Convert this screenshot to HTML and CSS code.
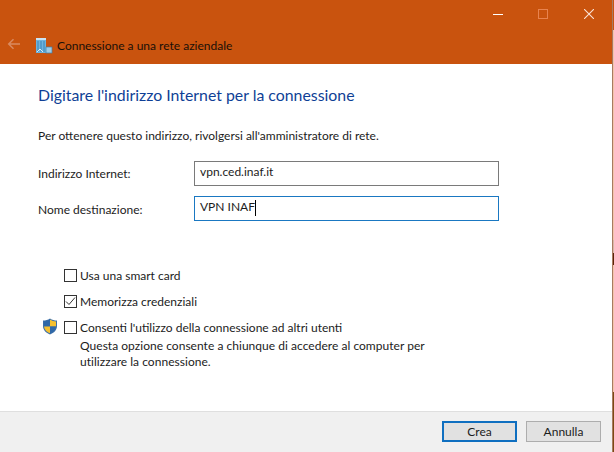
FILE: index.html
```html
<!DOCTYPE html>
<html lang="it">
<head>
<meta charset="utf-8">
<title>Connessione a una rete aziendale</title>
<link rel="stylesheet" href="styles.css">
</head>
<body>
<div class="window">
  <header class="titlebar">
    <div class="controls">
      <span class="ctl"><svg width="10" height="10" viewBox="0 0 10 10"><path d="M0 5.500h10" stroke="#fff" fill="none"/></svg></span>
      <span class="ctl"><svg width="10" height="10" viewBox="0 0 10 10"><rect x=".5" y=".5" width="9" height="9" stroke="#e8834f" fill="none"/></svg></span>
      <span class="ctl"><svg width="10" height="10" viewBox="0 0 10 10"><path d="M0 0l10 10M10 0L0 10" stroke="#fbe3d6" stroke-width="1.1" fill="none"/></svg></span>
    </div>
    <div class="navrow">
      <svg class="back" width="14" height="12" viewBox="0 0 14 12"><path d="M13 6H2M6.500 1.200 1.700 6l4.800 4.800" stroke="#d98a60" stroke-width="1.500" fill="none"/></svg>
      <svg class="appicon" width="18" height="17" viewBox="0 0 18 17">
        <rect x="1" y="1" width="10" height="15" fill="#6fb3dc"/>
        <rect x="1" y="1" width="10" height="2" fill="#c9e4f4"/>
        <path d="M3 4v11M6 4v11M9 4v11" stroke="#2f78ab" stroke-width=".8"/>
        <rect x="11" y="10" width="6" height="6" fill="#9dcbe6" stroke="#3d7fa8" stroke-width=".7"/>
        <path d="M2 15l3-3 3 3" stroke="#fff" stroke-width=".8" fill="none"/>
      </svg>
      <span class="wintitle">Connessione a una rete aziendale</span>
    </div>
  </header>
  <main class="content">
    <h1 class="heading">Digitare l'indirizzo Internet per la connessione</h1>
    <p class="intro">Per ottenere questo indirizzo, rivolgersi all'amministratore di rete.</p>
    <div class="fields">
      <label class="flabel">Indirizzo Internet:</label>
      <div class="input">vpn.ced.inaf.it</div>
      <label class="flabel lower">Nome destinazione:</label>
      <div class="input focused">VPN INAF<span class="caret"></span></div>
    </div>
    <div class="options">
      <div class="opt"><span class="check"></span><span>Usa una smart card</span></div>
      <div class="opt"><span class="check"><svg width="13" height="13" viewBox="0 0 13 13"><path d="M2 6.500l3 3 6-7" stroke="#333" fill="none"/></svg></span><span>Memorizza credenziali</span></div>
      <div class="opt shielded">
        <svg class="shield" width="16" height="17" viewBox="0 0 16 17">
          <path d="M8 .5C6 2 3.500 2.500 1 2.500V8c0 4 3 7 7 8.500 4-1.500 7-4.500 7-8.500V2.500C12.500 2.500 10 2 8 .5z" fill="#3a6ea8"/>
          <path d="M8 1.500V8.500H2V3.400C4 3.300 6.300 2.800 8 1.500z" fill="#2f68a8"/>
          <path d="M8 1.500c1.700 1.300 4 1.800 6 1.900v5.100H8z" fill="#f5c02f"/>
          <path d="M2 8.500h6v6.800C4.800 14 2.300 11.800 2 8.500z" fill="#f5c02f"/>
          <path d="M8 8.500h6c-.3 3.300-2.800 5.500-6 6.800z" fill="#2f68a8"/>
        </svg>
        <span class="check"></span><span>Consenti l'utilizzo della connessione ad altri utenti</span>
      </div>
      <p class="optnote">Questa opzione consente a chiunque di accedere al computer per<br>utilizzare la connessione.</p>
    </div>
  </main>
  <footer class="footer">
    <button class="btn primary">Crea</button>
    <button class="btn">Annulla</button>
  </footer>
</div>
</body>
</html>
```

FILE: styles.css
```css
html, body {
  margin: 0;
  padding: 0;
  height: 100%;
}
body {
  background: linear-gradient(to bottom,
    #c9530e 0, #c9530e 30px,
    #f3c4ac 30px, #f3c4ac 240px,
    #d8b8a8 240px, #d8b8a8 253px,
    #5a2408 253px, #5a2408 265px,
    #f3c4ac 265px, #f3c4ac 392px,
    #7a4a12 392px, #7a4a12 100%);
  font-family: Lato, "Open Sans", sans-serif;
  font-size: 12px;
  color: #1c1c1c;
  overflow: hidden;
}
.window {
  width: 613px;
  height: 452px;
  box-sizing: border-box;
  border-right: 1px solid #a87a62;
  display: flex;
  flex-direction: column;
  background: #fff;
}
.titlebar {
  height: 64px;
  background: #c9530e;
  flex: none;
  display: flex;
  flex-direction: column;
}
.controls {
  display: flex;
  justify-content: flex-end;
  height: 30px;
  padding: 9px 18px 0 0;
  gap: 35px;
  box-sizing: border-box;
}
.ctl {
  display: block;
  width: 10px;
  height: 10px;
}
.ctl:last-child { margin-left: 1px; }
.ctl svg { display: block; }
.navrow {
  display: flex;
  align-items: center;
  height: 30px;
  padding-left: 7px;
}
.back { margin: 0 14px 2px 0; }
.appicon { margin-right: 4px; }
.wintitle { font-size: 12px; color: #1a1008; }
.content {
  flex: 1;
  padding: 0 0 0 38px;
}
.heading {
  margin: 20px 0 0;
  font-size: 15.850px;
  line-height: 22px;
  font-weight: 400;
  color: #0f3f96;
}
.intro {
  margin: 22px 0 0;
  line-height: 16px;
}
.fields {
  margin-top: 17px;
  display: grid;
  grid-template-columns: 156px 305px;
  row-gap: 10px;
  align-items: center;
}
.flabel { line-height: 16px; }
.flabel.lower { padding-top: 3px; }
.input {
  box-sizing: border-box;
  height: 25px;
  border: 1px solid #7a7a7a;
  padding: 0 5px;
  line-height: 20px;
  display: flex;
  align-items: flex-start;
}
.input.focused { border-color: #1a78c2; }
.caret {
  display: inline-block;
  width: 1px;
  height: 16px;
  background: #000;
  margin-top: 3px;
}
.options {
  margin: 41px 0 0 26px;
  display: flex;
  flex-direction: column;
}
.opt {
  position: relative;
  display: flex;
  align-items: center;
  height: 26px;
  gap: 3px;
}
.check {
  box-sizing: border-box;
  width: 13px;
  height: 13px;
  border: 1px solid #333;
  background: #fff;
  display: block;
  flex: none;
}
.check svg { display: block; margin: -1px; }
.shield {
  position: absolute;
  left: -22px;
  top: 4px;
}
.optnote {
  margin: -2px 0 0 16px;
  line-height: 16px;
  letter-spacing: 0.03px;
}
.footer {
  flex: none;
  height: 41px;
  background: #f0f0f0;
  border-top: 1px solid #dfdfdf;
  display: flex;
  justify-content: flex-end;
  align-items: flex-start;
  gap: 9px;
  padding: 9px 11px 0 0;
  box-sizing: border-box;
}
.btn {
  box-sizing: border-box;
  width: 75px;
  height: 21px;
  background: #e1e1e1;
  border: 1px solid #adadad;
  font: inherit;
  color: #1c1c1c;
  padding: 0;
}
.btn.primary {
  border: 2px solid #0f6fc0;
}
```
